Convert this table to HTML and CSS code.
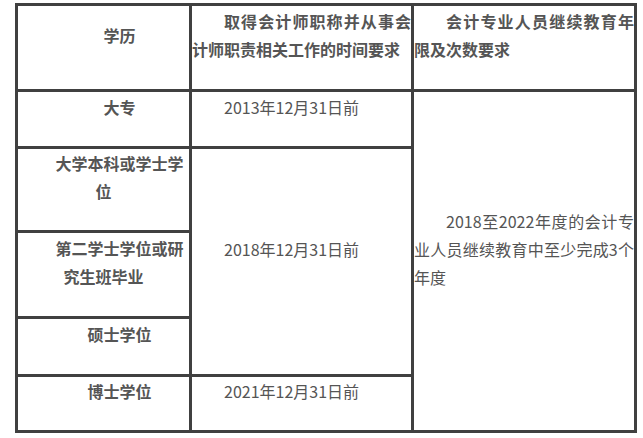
FILE: index.html
```html
<!DOCTYPE html>
<html lang="zh-CN">
<head>
<meta charset="utf-8">
<title>会计师职称要求</title>
<link rel="stylesheet" href="styles.css">
</head>
<body>
<div class="table">
  <div class="cell c1 r1 b"><p class="center">学历</p></div>
  <div class="cell c2 r1 b"><p class="just">取得会计师职称并从事会计师职责相关工作的时间要求</p></div>
  <div class="cell c3 r1 b"><p class="just">会计专业人员继续教育年限及次数要求</p></div>

  <div class="cell c1 r2 b"><p class="center">大专</p></div>
  <div class="cell c2 r2"><p class="just">2013年12月31日前</p></div>
  <div class="cell c3 r2-6"><p class="just">2018至2022年度的会计专业人员继续教育中至少完成3个年度</p></div>

  <div class="cell c1 r3 b"><p class="center">大学本科或学士学位</p></div>
  <div class="cell c2 r3-5"><p class="just">2018年12月31日前</p></div>

  <div class="cell c1 r4 b"><p class="center">第二学士学位或研究生班毕业</p></div>

  <div class="cell c1 r5 b"><p class="center">硕士学位</p></div>

  <div class="cell c1 r6 b"><p class="center">博士学位</p></div>
  <div class="cell c2 r6"><p class="just">2021年12月31日前</p></div>
</div>
</body>
</html>
```
FILE: styles.css
```css
html, body {
  margin: 0;
  padding: 0;
  background: #ffffff;
}

body {
  font-family: "Noto Sans CJK SC", "Noto Sans", sans-serif;
  font-size: 16px;
  line-height: 28px;
  color: #555555;
}

.table {
  margin: 3px 0 0 15px;
  width: 622px;
  box-sizing: border-box;
  display: grid;
  grid-template-columns: 171px 219px 220px;
  grid-template-rows: 83px 54px 81px 83px 55px 53px;
  gap: 3px;
  padding: 3px;
  background: #404040;
}

.cell {
  background: #ffffff;
  display: flex;
  flex-direction: column;
  justify-content: center;
  padding: 0 0 25px 0;
  box-sizing: border-box;
  min-width: 0;
}

.cell p {
  margin: 0;
  text-indent: 2em;
}

.center { text-align: center; }
.just { text-align: justify; }

.b { font-weight: 700; }

.c1 { grid-column: 1; }
.c2 { grid-column: 2; }
.c3 { grid-column: 3; }

.r1 { grid-row: 1; }
.r2 { grid-row: 2; }
.r3 { grid-row: 3; }
.r4 { grid-row: 4; }
.r5 { grid-row: 5; }
.r6 { grid-row: 6; }
.r3-5 { grid-row: 3 / 6; }
.r2-6 { grid-row: 2 / 7; }
```
